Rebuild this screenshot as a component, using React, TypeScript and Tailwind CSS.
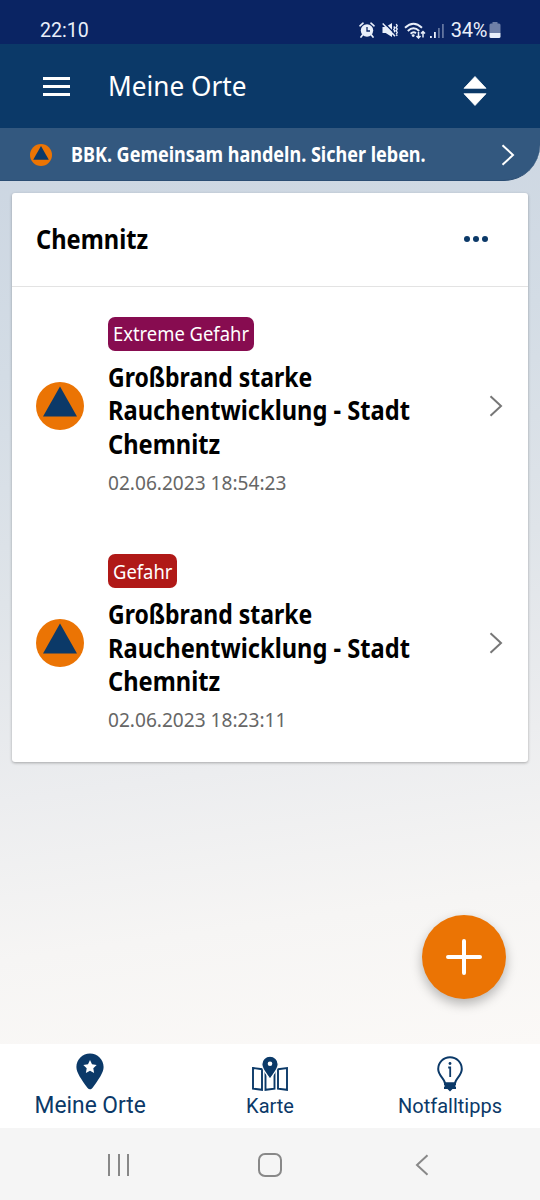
import type { ReactNode } from "react"

const title = [
  { text: "Großbrand starke", fit: "scale-x-[0.885]" },
  { text: "Rauchentwicklung - Stadt", fit: "scale-x-[0.91]" },
  { text: "Chemnitz", fit: "scale-x-[0.91]" },
]

const warnings = [
  {
    level: "Extreme Gefahr",
    badge: "w-[146px] bg-[#870c50]",
    label: "scale-x-[0.92]",
    date: "02.06.2023 18:54:23",
  },
  {
    level: "Gefahr",
    badge: "w-[69px] bg-[#b01917]",
    label: "scale-x-[0.92]",
    date: "02.06.2023 18:23:11",
  },
]

function CivilDefense({ className }: { className: string }) {
  return (
    <svg viewBox="0 0 48 48" className={className}>
      <circle cx="24" cy="24" r="24" fill="#eb7404" />
      <path d="M24 4.5 41 34.5H7Z" fill="#0b3968" />
    </svg>
  )
}

function Chevron({ className }: { className: string }) {
  return (
    <svg viewBox="0 0 14 22" fill="none" stroke="currentColor" strokeWidth="2" className={className}>
      <path d="M1.5 1.2 12 11 1.5 20.8" />
    </svg>
  )
}

function StatusBar() {
  return (
    <div className="flex h-11 items-end bg-[#0a2463] pl-10 pr-[39px] font-[Roboto] text-[#e9effa]">
      <span className="mb-[3px] origin-left scale-x-[0.98] text-[20px] leading-[22px]">22:10</span>
      <div className="ml-auto flex items-center pb-[3px]">
        <svg viewBox="0 0 16 16" className="mr-[7px] h-4 w-4">
          <circle cx="8" cy="8.5" r="6.2" fill="currentColor" />
          <path d="M1 3.8 4 1.2M15 3.8 12 1.2M3.5 13 2 15M12.5 13 14 15" stroke="currentColor" strokeWidth="1.7" strokeLinecap="round" />
          <path d="M8 5v4h3" fill="none" stroke="#0a2463" strokeWidth="1.3" />
        </svg>
        <svg viewBox="0 0 16 16" className="mr-[6px] h-4 w-4">
          <path d="M0.5 5h3.2L10 1v14L3.7 11H0.5Z" fill="currentColor" />
          <path d="M11.8 4.5l1 1.5-1 1.5 1 1.5-1 1.5 1 1.500M14.200 2l1 1.700-1 1.700 1 1.700-1 1.700 1 1.700-1 1.700 1 1.700" fill="none" stroke="currentColor" strokeWidth="1.4" />
          <path d="M1.8 0.5 14 13" stroke="#0a2463" strokeWidth="1.5" />
          <path d="M0.7 1.4 13 14.300" stroke="currentColor" strokeWidth="1.500" />
        </svg>
        <svg viewBox="0 0 22 17" fill="none" stroke="currentColor" className="mr-[4px] h-[17px] w-[22px]">
          <path d="M1 5.8Q9.5-2.2 18 5.8M3.8 9Q9.5 3.6 15.2 9M6.600 11.800Q9.500 9.200 12 11.200" strokeWidth="1.900" />
          <circle cx="9.2" cy="13.6" r="1.4" fill="currentColor" stroke="none" />
          <path d="M14.5 10v6M12.5 14l2 2 2-2M19 15.500v-6M17 11.500l2-2 2 2" strokeWidth="1.500" />
        </svg>
        <svg viewBox="0 0 14 15" fill="currentColor" className="mr-[7px] h-[15px] w-[14px]">
          <path d="M0 13h1.8v2H0ZM4 9h1.800V15H4Z" />
          <path d="M8 5h1.800v10H8ZM12 1h1.800v14h-1.800Z" opacity="0.4" />
        </svg>
        <span className="mr-[2px] text-[20px] leading-[22px] tracking-[-0.3px]">34%</span>
        <svg viewBox="0 0 12 16" fill="currentColor" className="h-4 w-3">
          <path d="M3.5 0h5v1.5H10a1.5 1.5 0 0 1 1.5 1.5v8H0.5V3A1.5 1.5 0 0 1 2 1.5h1.5Z" opacity="0.45" />
          <path d="M0.5 11h11v3.5A1.5 1.5 0 0 1 10 16H2A1.5 1.5 0 0 1 .5 14.5Z" />
        </svg>
      </div>
    </div>
  )
}

function Header() {
  return (
    <header className="flex h-[84px] items-center bg-[#0b3968] pl-[43px] pr-[53px] text-white">
      <div className="flex w-[27px] flex-col gap-[5px]">
        <span className="h-[3px] bg-white" />
        <span className="h-[3px] bg-white" />
        <span className="h-[3px] bg-white" />
      </div>
      <h1 className="mb-0.5 ml-[38px] origin-left scale-x-[0.935] whitespace-nowrap text-[28px] leading-9">Meine Orte</h1>
      <svg viewBox="0 0 24 32" className="ml-auto mt-[9px] h-8 w-6" fill="#fff" stroke="#fff" strokeLinejoin="round">
        <path d="M12 1.5 23 13.300H1ZM1 18.700h22L12 30.500Z" strokeWidth="0.800" />
      </svg>
    </header>
  )
}

function Banner() {
  return (
    <div className="flex h-[52.5px] items-center rounded-br-[36px] border-b border-[#2b4d73] bg-[#33587f] pl-[30px] pr-[25px] text-white">
      <CivilDefense className="mt-0.5 h-[22px] w-[22px]" />
      <span className="ml-[19px] mt-0.5 w-[355px] origin-left scale-x-[0.857] whitespace-nowrap text-[21px] font-bold">
        BBK. Gemeinsam handeln. Sicher leben.
      </span>
      <Chevron className="ml-auto mt-0.5 h-[22px] w-[14px] shrink-0" />
    </div>
  )
}

function PlaceCard() {
  return (
    <section className="mx-3 mt-[12.5px] h-[569px] rounded-[3px] bg-white shadow-[0_1px_3px_rgba(0,0,0,0.3)]">
      <div className="flex h-[94px] items-center justify-between border-b border-[#e3e3e3] pl-6 pr-10">
        <h2 className="origin-left scale-x-[0.91] text-[26px] font-bold text-black">Chemnitz</h2>
        <div className="mb-0.5 flex gap-[3px]">
          <i className="h-1.5 w-1.5 rounded-full bg-[#0b3968]" />
          <i className="h-1.5 w-1.5 rounded-full bg-[#0b3968]" />
          <i className="h-1.5 w-1.5 rounded-full bg-[#0b3968]" />
        </div>
      </div>
      {warnings.map((w) => (
        <article key={w.date} className="flex h-[237.5px] items-center pl-6 pr-[25px]">
          <CivilDefense className="h-12 w-12" />
          <div className="ml-6 h-[178px]">
            <div className={`flex h-[34px] items-center rounded-[7px] pl-[5px] pt-px text-white ${w.badge}`}>
              <span className={`origin-left whitespace-nowrap text-[20px] leading-none ${w.label}`}>{w.level}</span>
            </div>
            <h3 className="mt-[10px] text-[26px] font-bold leading-[33.5px] text-black">
              {title.map((line) => (
                <span key={line.text} className={`block origin-left whitespace-nowrap ${line.fit}`}>{line.text}</span>
              ))}
            </h3>
            <p className="mt-[7.5px] origin-left scale-x-[0.955] whitespace-nowrap text-[20px] leading-[28px] text-[#666]">{w.date}</p>
          </div>
          <Chevron className="ml-auto h-[22px] w-[14px] shrink-0 text-[#777]" />
        </article>
      ))}
    </section>
  )
}

function Tab({ icon, children }: { icon: ReactNode; children: ReactNode }) {
  return (
    <div className="flex w-[180px] flex-col items-center">
      <div className="flex h-12 items-end">{icon}</div>
      {children}
    </div>
  )
}

function BottomNav() {
  return (
    <nav className="flex h-[84px] bg-white font-[Roboto] text-[#0b3968] shadow-[0_-1px_2px_rgba(0,0,0,0.06)]">
      <Tab
        icon={
          <svg viewBox="0 0 28 37" className="mb-[2px] h-[37px] w-7">
            <path d="M14 .5C6.500 .5 .4 6.500 .4 14c0 5.500 5 12.500 11.200 21 1.300 1.800 3.500 1.800 4.800 0C22.600 26.500 27.600 19.500 27.600 14 27.600 6.500 21.500 .5 14 .5Z" fill="currentColor" />
            <path d="m14 7 2 4.300 4.700.6-3.400 3.300.8 4.700-4.100-2.200-4.100 2.200.8-4.700-3.400-3.300 4.700-.6Z" fill="#fff" />
          </svg>
        }
      >
        <span className="origin-center scale-x-[0.99] text-[23px] leading-[27px]">Meine Orte</span>
      </Tab>
      <Tab
        icon={
          <svg viewBox="0 0 38 36" fill="none" stroke="currentColor" strokeWidth="1.900" className="h-9 w-[38px]">
            <path d="M2 12 11 13.200v20.600L2 32.600ZM14.500 13.200l9-1.200v20.600l-9 1.200ZM27 13.200l9-1.200v21.800l-9-1.200Z" />
            <path d="M19 .2c-4.600 0-8.200 3.600-8.200 8 0 5 4.700 9.600 8.200 15 3.500-5.400 8.200-10 8.200-15C27.200 3.800 23.600.2 19 .2Z" fill="currentColor" stroke="#fff" strokeWidth="1.200" />
            <circle cx="19" cy="7.8" r="2.300" fill="#fff" stroke="none" />
          </svg>
        }
      >
        <span className="mt-[2px] text-[20px] leading-6">Karte</span>
      </Tab>
      <Tab
        icon={
          <svg viewBox="0 0 28 36" fill="none" stroke="currentColor" className="h-9 w-7">
            <path d="M9 27.500c0-5-6.800-7.500-6.800-14.500a11.800 11.800 0 0 1 23.600 0c0 7-6.800 9.500-6.800 14.500Z" strokeWidth="2" />
            <path d="M8 26.500h12v2.500l-1 1 1 1v2h-3.500L14 35.500l-2.500-2.500H8v-2l1-1-1-1Z" fill="currentColor" stroke="none" />
            <circle cx="14" cy="7.500" r="1.400" fill="currentColor" stroke="none" />
            <path d="M12.200 11.500h2v9.500" strokeWidth="1.800" />
          </svg>
        }
      >
        <span className="mt-[2px] text-[20px] leading-6">Notfalltipps</span>
      </Tab>
    </nav>
  )
}

function SystemBar() {
  return (
    <div className="flex h-[72px] items-center bg-[#f5f5f5] pl-[108px] pr-[111px] pt-0.5 text-[#888]">
      <div className="flex gap-[7.5px]">
        <i className="h-[22px] w-[2px] bg-[#888]" />
        <i className="h-[22px] w-[2px] bg-[#888]" />
        <i className="h-[22px] w-[2px] bg-[#888]" />
      </div>
      <i className="ml-[129px] h-6 w-6 rounded-[7px] border-2 border-[#888]" />
      <Chevron className="ml-auto h-6 w-[14px] rotate-180" />
    </div>
  )
}

export default function App() {
  return (
    <div className="flex h-[1200px] w-[540px] flex-col overflow-hidden font-['Noto_Sans',sans-serif]">
      <StatusBar />
      <Header />
      <main className="relative h-[916px] bg-[linear-gradient(172deg,#cbd5e1_0%,#d3dce5_25%,#dfe4e9_48%,#ecedef_68%,#f6f5f4_84%,#fbf9f7_100%)]">
        <Banner />
        <PlaceCard />
        <button className="absolute bottom-[45px] right-[34.5px] flex h-[84px] w-[84px] items-center justify-center rounded-full bg-[#eb7404] shadow-[0_5px_12px_rgba(0,0,0,0.28)]">
          <svg viewBox="0 0 36 36" className="h-9 w-9" stroke="#fff" strokeWidth="4" strokeLinecap="round">
            <path d="M18 2v32M2 18h32" />
          </svg>
        </button>
      </main>
      <BottomNav />
      <SystemBar />
    </div>
  )
}
